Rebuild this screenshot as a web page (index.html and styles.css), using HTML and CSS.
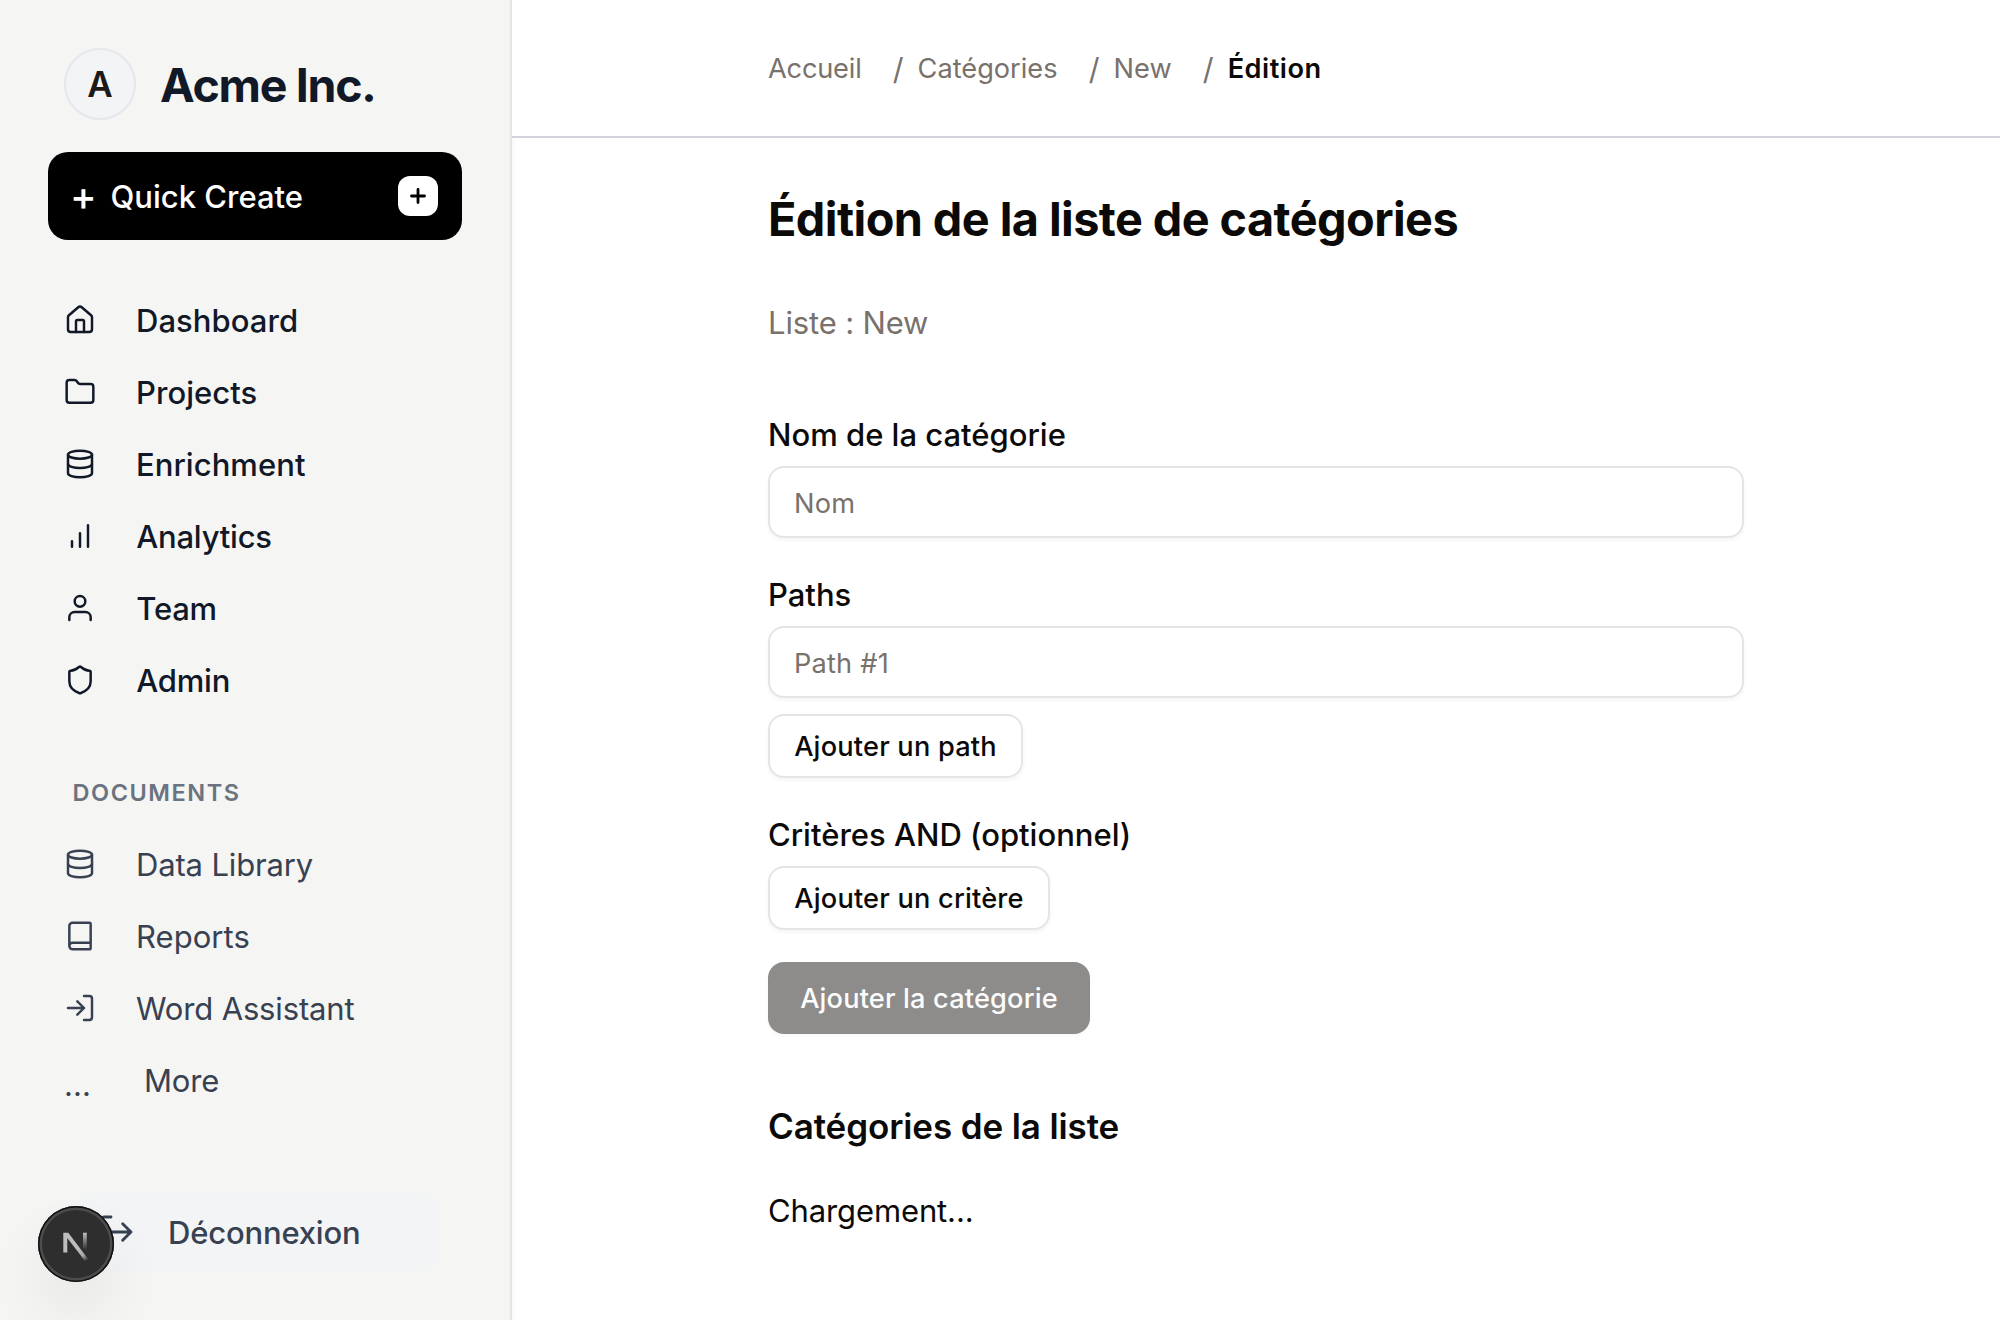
FILE: index.html
```
<!DOCTYPE html>
<html lang="fr">
<head>
<meta charset="utf-8">
<title>Édition de la liste de catégories</title>
<link rel="stylesheet" href="styles.css">
</head>
<body>
<div class="app">
  <aside class="sidebar">
    <div class="brand">
      <span class="avatar">A</span>
      <span class="brand-name">Acme Inc.</span>
    </div>
    <button class="quick-create" type="button">
      <span class="quick-plus">+</span>
      <span class="quick-label">Quick Create</span>
      <span class="quick-badge">
        <svg class="plus-icon" viewBox="0 0 24 24"><path d="M5.500 12h13M12 5.500v13"/></svg>
      </span>
    </button>
    <nav class="nav">
      <a class="nav-item"><svg class="icon" viewBox="0 0 24 24"><path d="M15 21v-8a1 1 0 0 0-1-1h-4a1 1 0 0 0-1 1v8"/><path d="M3 10a2 2 0 0 1 .709-1.528l7-5.999a2 2 0 0 1 2.582 0l7 5.999A2 2 0 0 1 21 10v9a2 2 0 0 1-2 2H5a2 2 0 0 1-2-2z"/></svg><span class="nav-label">Dashboard</span></a>
      <a class="nav-item"><svg class="icon" viewBox="0 0 24 24"><path d="M20 20a2 2 0 0 0 2-2V8a2 2 0 0 0-2-2h-7.900a2 2 0 0 1-1.690-.900L9.600 3.900A2 2 0 0 0 7.930 3H4a2 2 0 0 0-2 2v13a2 2 0 0 0 2 2Z"/></svg><span class="nav-label">Projects</span></a>
      <a class="nav-item"><svg class="icon" viewBox="0 0 24 24"><ellipse cx="12" cy="5" rx="9" ry="3"/><path d="M3 5v14a9 3 0 0 0 18 0V5"/><path d="M3 12a9 3 0 0 0 18 0"/></svg><span class="nav-label">Enrichment</span></a>
      <a class="nav-item"><svg class="icon" viewBox="0 0 24 24"><path d="M12 20V10M18 20V4M6 20v-4"/></svg><span class="nav-label tight">Analytics</span></a>
      <a class="nav-item"><svg class="icon" viewBox="0 0 24 24"><path d="M20 21v-2a4 4 0 0 0-4-4H8a4 4 0 0 0-4 4v2"/><circle cx="12" cy="7" r="4"/></svg><span class="nav-label tight">Team</span></a>
      <a class="nav-item"><svg class="icon" viewBox="0 0 24 24"><path d="M20 13c0 5-3.500 7.500-7.660 8.950a1 1 0 0 1-.670-.010C7.500 20.500 4 18 4 13V6a1 1 0 0 1 1-1c2 0 4.500-1.200 6.240-2.720a1.170 1.170 0 0 1 1.520 0C14.510 3.810 17 5 19 5a1 1 0 0 1 1 1z"/></svg><span class="nav-label tight">Admin</span></a>
    </nav>
    <div class="section-title">DOCUMENTS</div>
    <nav class="nav nav-docs">
      <a class="nav-item"><svg class="icon" viewBox="0 0 24 24"><ellipse cx="12" cy="5" rx="9" ry="3"/><path d="M3 5v14a9 3 0 0 0 18 0V5"/><path d="M3 12a9 3 0 0 0 18 0"/></svg><span class="nav-label">Data Library</span></a>
      <a class="nav-item"><svg class="icon" viewBox="0 0 24 24"><path d="M4 19.500v-15A2.500 2.500 0 0 1 6.500 2H19a1 1 0 0 1 1 1v18a1 1 0 0 1-1 1H6.500a1 1 0 0 1 0-5H20"/></svg><span class="nav-label wide">Reports</span></a>
      <a class="nav-item"><svg class="icon" viewBox="0 0 24 24"><path d="M15 3h4a2 2 0 0 1 2 2v14a2 2 0 0 1-2 2h-4M10 17l5-5-5-5M15 12H3"/></svg><span class="nav-label">Word Assistant</span></a>
      <a class="nav-item"><span class="dots">...</span><span class="nav-label">More</span></a>
    </nav>
    <button class="logout" type="button">
      <svg class="logout-icon" viewBox="0 0 24 24"><path d="M9 21H5a2 2 0 0 1-2-2V5a2 2 0 0 1 2-2h4M16 17l5-5-5-5M21 12H9"/></svg>
      <span class="logout-label">Déconnexion</span>
    </button>
  </aside>

  <div class="page">
    <header class="topbar">
      <nav class="crumbs">
        <a class="crumb crumb-home">Accueil</a>
        <span class="slash">/</span>
        <a class="crumb">Catégories</a>
        <span class="slash">/</span>
        <a class="crumb">New</a>
        <span class="slash">/</span>
        <span class="crumb current">Édition</span>
      </nav>
    </header>
    <main class="content">
      <h1 class="title">Édition de la liste de catégories</h1>
      <p class="subtitle">Liste : New</p>
      <form class="form">
        <div class="field">
          <label class="label" for="name">Nom de la catégorie</label>
          <input class="input" id="name" type="text" placeholder="Nom">
        </div>
        <div class="field">
          <label class="label" for="path">Paths</label>
          <input class="input" id="path" type="text" placeholder="Path #1">
          <button class="outline add-path" type="button">Ajouter un path</button>
        </div>
        <div class="field">
          <span class="label">Critères AND (optionnel)</span>
          <button class="outline add-criterion" type="button">Ajouter un critère</button>
        </div>
        <button class="submit" type="button">Ajouter la catégorie</button>
      </form>
      <h2 class="list-title">Catégories de la liste</h2>
      <p class="loading">Chargement...</p>
    </main>
  </div>
</div>

<div class="dev-badge">
  <svg class="dev-logo" viewBox="0 0 76 76">
    <defs>
      <linearGradient id="diag" gradientUnits="userSpaceOnUse" x1="38" y1="42" x2="49" y2="55"><stop offset="0" stop-color="#bdbdbd"/><stop offset=".6" stop-color="#a8a8a8"/><stop offset="1" stop-color="#a8a8a8" stop-opacity="0"/></linearGradient>
      <linearGradient id="stem" gradientUnits="userSpaceOnUse" x1="47" y1="27" x2="47" y2="44"><stop offset="0" stop-color="#bdbdbd"/><stop offset="1" stop-color="#bdbdbd" stop-opacity="0"/></linearGradient>
    </defs>
    <path d="M25.300 26.700h5L50.300 53.200l-3.300 1.800L29.300 32v14.600h-4z" fill="url(#diag)"/>
    <path d="M45 26.700h3.800v17.500H45z" fill="url(#stem)"/>
  </svg>
</div>
</body>
</html>
```
FILE: styles.css
```
* { box-sizing: border-box; }
body {
  margin: 0;
  background: #fff;
  color: #0c0a09;
  font-family: Inter, "Liberation Sans", sans-serif;
  font-size: 31px;
}
h1, h2, p { margin: 0; }
button { font-family: inherit; border: 0; margin: 0; }
svg { flex: none; display: block; fill: none; stroke: currentColor; stroke-width: 1.850; stroke-linecap: round; stroke-linejoin: round; }

.app { display: flex; height: 1320px; overflow: hidden; }

/* Sidebar */
.sidebar {
  width: 512px;
  flex: none;
  padding: 48px;
  background: #f5f5f3;
  border-right: 2px solid #e5e5e3;
  box-shadow: 0 2px 6px rgba(0, 0, 0, .06);
  display: flex;
  flex-direction: column;
}
.brand { display: flex; align-items: center; gap: 24px; padding-left: 16px; height: 72px; }
.avatar {
  width: 72px; height: 72px;
  display: flex; align-items: center; justify-content: center;
  border: 2px solid #e5e7eb; border-radius: 50%;
  background: #f3f4f6; color: #1c1917;
  font-size: 35px; font-weight: 600; line-height: 48px;
}
.brand-name { font-size: 46.5px; font-weight: 700; line-height: 64px; letter-spacing: -1.27px; color: #111827; padding-top: 2px; }

.quick-create {
  margin-top: 32px;
  height: 88px; width: 414px;
  padding: 0 24px 0 22px;
  display: flex; align-items: center;
  background: #000; color: #fff; border-radius: 20px;
}
.quick-plus { width: 40.500px; text-align: left; font-size: 40px; font-weight: 500; line-height: 48px; padding-bottom: 1px; }
.quick-label { font-size: 31px; font-weight: 500; line-height: 48px; padding-top: 1px; }
.quick-badge {
  margin-left: auto;
  width: 40px; height: 40px;
  display: flex; align-items: center; justify-content: center;
  background: #fff; color: #000; border-radius: 12px;
}
.plus-icon { width: 24px; height: 24px; stroke-width: 2.800; }

.nav { margin-top: 44px; display: flex; flex-direction: column; color: #111827; font-weight: 500; }
.nav-item { height: 72px; padding-left: 16px; display: flex; align-items: center; gap: 40px; }
.icon { width: 32px; height: 32px; }
.nav-label { line-height: 48px; padding-top: 1px; letter-spacing: .05px; }
.nav-label.tight { padding-left: .3px; letter-spacing: -.22px; }
.section-title {
  margin-top: 61px; padding-left: 24.500px;
  font-size: 23.500px; line-height: 32px; font-weight: 600; letter-spacing: 1.550px; color: #6b7280;
}
.nav-docs { margin-top: 19px; color: #374151; font-weight: 400; }
.nav-docs .nav-label { letter-spacing: -.15px; }
.nav-docs .nav-label.wide { letter-spacing: .05px; }
.dots { width: 40px; line-height: 48px; padding-top: 9px; letter-spacing: .1px; }

.logout {
  margin: 76px 0 0 24px;
  width: 368px; height: 80px; flex: none;
  padding: 0 24px;
  display: flex; align-items: center; gap: 32px;
  background: #f3f4f6; color: #374151; border-radius: 24px;
}
.logout-icon { width: 40px; height: 40px; stroke-width: 1.700; }
.logout-label { font-size: 31px; font-weight: 500; line-height: 48px; padding-top: 1px; letter-spacing: -.18px; }

/* Page */
.page { flex: 1; min-width: 0; }
.topbar { position: relative; height: 138px; padding-left: 256px; background: #fff; border-bottom: 2px solid #d1d5db; display: flex; align-items: center; }
.crumbs { display: flex; align-items: center; padding-top: 1px; font-size: 27.200px; line-height: 40px; color: #78716c; }
.crumb { letter-spacing: 0; }
.crumb-home { letter-spacing: -.2px; }
.slash { margin: 0 14px 0 31.200px; font-size: 30px; }
.current { color: #0c0a09; font-weight: 600; letter-spacing: .5px; }

.content { width: 1232px; padding: 49px 0 0 256px; }
.title { font-size: 46.800px; line-height: 64px; font-weight: 700; letter-spacing: -.560px; }
.subtitle { margin-top: 47px; line-height: 49px; letter-spacing: -.150px; color: #78716c; }
.form { margin-top: 63px; display: flex; flex-direction: column; align-items: flex-start; gap: 32px; }
.field { width: 976px; display: flex; flex-direction: column; align-items: flex-start; }
.label { line-height: 49px; font-weight: 500; margin-bottom: 7px; }
.input {
  width: 976px; height: 72px; margin: 0;
  padding: 3px 24px 0 24px;
  border: 2px solid #e5e5e5; border-radius: 16px; background: #fff;
  box-shadow: 0 2px 4px rgba(0, 0, 0, .05);
  font-family: inherit; font-size: 27.200px; letter-spacing: .200px; color: #0c0a09;
}
.input::placeholder { color: #78716c; opacity: 1; }
.outline {
  height: 64px; padding: 1px 0 0;
  border: 2px solid #e5e5e5; border-radius: 16px; background: #fff; color: #0c0a09;
  box-shadow: 0 2px 4px rgba(0, 0, 0, .05);
  font-size: 27.200px; font-weight: 500; letter-spacing: .200px;
}
.add-path { margin-top: 16px; width: 255px; }
.add-criterion { width: 282px; }
.submit {
  height: 72px; width: 322px; padding: 1px 0 0;
  border-radius: 16px; background: #8d8c8a; color: #fcfcfc;
  box-shadow: 0 2px 4px rgba(0, 0, 0, .03);
  font-size: 27.200px; font-weight: 500; letter-spacing: .160px;
}
.list-title { margin-top: 64px; font-size: 35px; line-height: 56px; font-weight: 600; letter-spacing: -.110px; }
.loading { margin-top: 32px; line-height: 49px; letter-spacing: -.120px; }

/* Floating development badge */
.dev-badge {
  position: absolute; left: 38px; top: 1206px;
  width: 76px; height: 76px; border-radius: 50%;
  background: #2e2e2e;
  box-shadow: inset 0 0 0 1.500px #111, inset 0 0 0 4px #4c4c4c, 0 32px 64px -8px rgba(0, 0, 0, .1);
}
.dev-logo { width: 76px; height: 76px; stroke: none; }
```
